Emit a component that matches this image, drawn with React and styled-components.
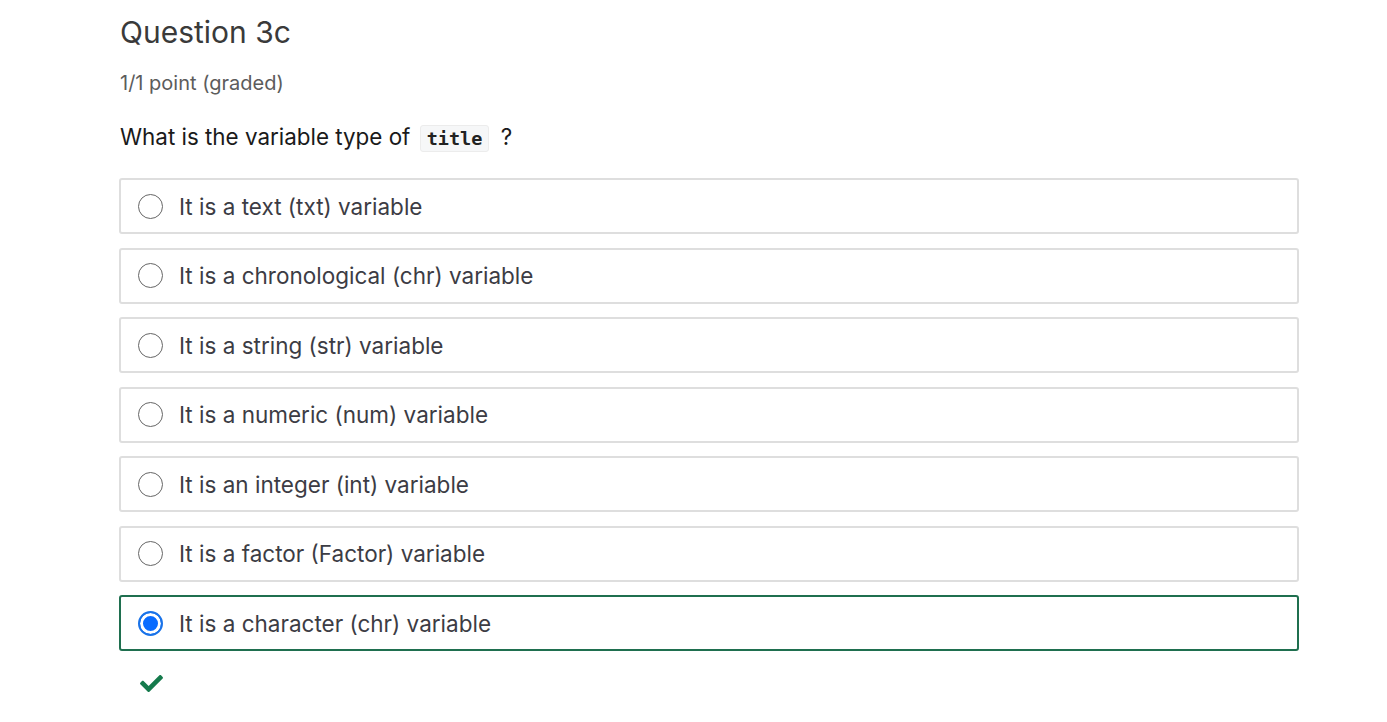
import styled, { createGlobalStyle } from "styled-components";
import { FaCheck } from "react-icons/fa";

const GlobalStyle = createGlobalStyle`
  body {
    margin: 0;
    background: #fff;
    font-family: Inter, "Noto Sans", sans-serif;
  }
`;

const options = [
  "It is a text (txt) variable",
  "It is a chronological (chr) variable",
  "It is a string (str) variable",
  "It is a numeric (num) variable",
  "It is an integer (int) variable",
  "It is a factor (Factor) variable",
  "It is a character (chr) variable",
];

const selected = 6;

const App = () => {
  return (
    <>
      <GlobalStyle />
      <Problem>
        <Title>Question 3c</Title>
        <Points>1/1 point (graded)</Points>
        <Prompt>
          What is the variable type of <Code>title</Code> ?
        </Prompt>
        <Choices>
          {options.map((text, i) => (
            <Choice key={text} $checked={i === selected}>
              <Radio $checked={i === selected} />
              <span>{text}</span>
            </Choice>
          ))}
        </Choices>
        <Status>
          <FaCheck size={23} color="#157a4c" />
        </Status>
      </Problem>
    </>
  );
};

const Problem = styled.div`
  width: 1180px;
  padding: 13px 0 0 119px;
`;

const Title = styled.h3`
  margin: 0 0 0 1px;
  font-size: 30px;
  line-height: 38px;
  font-weight: 400;
  color: #3a3a3a;
`;

const Points = styled.div`
  margin: 19px 0 0 1px;
  font-size: 20px;
  line-height: 26px;
  color: #5c5c5c;
`;

const Prompt = styled.p`
  margin: 26px 0 0 1px;
  font-size: 22.4px;
  line-height: 30px;
  color: #1a1a1a;
`;

const Code = styled.code`
  display: inline-block;
  margin: 0 5px 0 3px;
  padding: 0 6px;
  font-family: "DejaVu Sans Mono", "Liberation Mono", monospace;
  font-size: 18.5px;
  font-weight: 700;
  line-height: 25px;
  color: #222;
  background: #f6f7f8;
  border: 1px solid #ececec;
  border-radius: 3px;
`;

const Choices = styled.div`
  display: flex;
  flex-direction: column;
  gap: 13.5px;
  margin-top: 26px;
`;

const Choice = styled.label`
  box-sizing: border-box;
  height: 56px;
  display: flex;
  align-items: center;
  gap: 16px;
  padding: 0 17px;
  border: 2px solid ${(p) => (p.$checked ? "#1f6f4f" : "#dedede")};
  border-radius: 3px;
  font-size: 22.5px;
  color: #3c3c44;
`;

const Radio = styled.span`
  box-sizing: border-box;
  width: 25px;
  height: 25px;
  flex: none;
  border-radius: 50%;
  border: ${(p) => (p.$checked ? "2px solid #1a73e8" : "1.5px solid #666")};
  background: ${(p) => (p.$checked ? "#0a6cff" : "#fff")};
  box-shadow: ${(p) => (p.$checked ? "inset 0 0 0 3px #fff" : "none")};
`;

const Status = styled.div`
  margin: 21px 0 0 21px;
  height: 23px;
`;

export default App;
